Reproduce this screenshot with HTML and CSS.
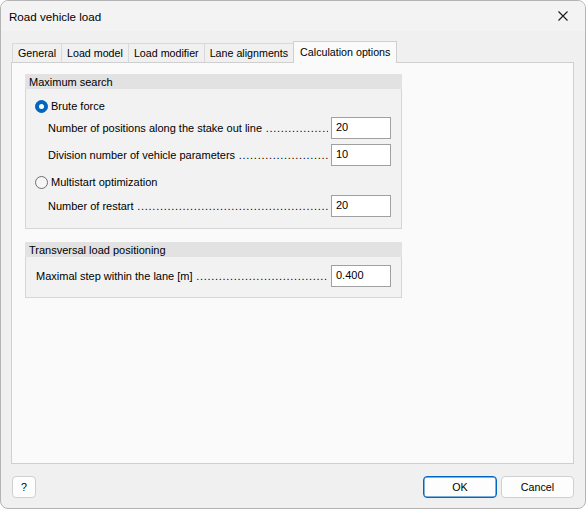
FILE: index.html
```html
<!DOCTYPE html>
<html>
<head>
<meta charset="utf-8">
<link rel="stylesheet" href="styles.css">
</head>
<body>
<div class="window">
  <div class="titlebar">
    <span class="title">Road vehicle load</span>
    <svg class="close" width="10" height="10" viewBox="0 0 10 10"><path d="M0.5 0.5 L9.5 9.5 M9.5 0.5 L0.5 9.5" stroke="#1a1a1a" stroke-width="1.1" fill="none"/></svg>
  </div>
  <div class="content">
    <div class="tabs">
      <div class="tab">General</div>
      <div class="tab">Load model</div>
      <div class="tab">Load modifier</div>
      <div class="tab">Lane alignments</div>
      <div class="tab active">Calculation options</div>
    </div>
    <div class="panel">
      <div class="group">
        <div class="group-head">Maximum search</div>
        <div class="group-body body-max">
          <div class="radio-row r1"><span class="radio checked"></span><span>Brute force</span></div>
          <div class="field f1 indent"><span class="label">Number of positions along the stake out line</span><span class="input">20</span></div>
          <div class="field f2 indent"><span class="label">Division number of vehicle parameters</span><span class="input">10</span></div>
          <div class="radio-row r2"><span class="radio"></span><span>Multistart optimization</span></div>
          <div class="field f3 indent"><span class="label">Number of restart</span><span class="input">20</span></div>
        </div>
      </div>
      <div class="group g2">
        <div class="group-head">Transversal load positioning</div>
        <div class="group-body body-trans">
          <div class="field plain"><span class="label">Maximal step within the lane [m]</span><span class="input">0.400</span></div>
        </div>
      </div>
    </div>
    <div class="footer">
      <div class="btn help">?</div>
      <div class="spacer"></div>
      <div class="btn ok">OK</div>
      <div class="btn cancel">Cancel</div>
    </div>
  </div>
</div>
</body>
</html>
```
FILE: styles.css
```css
* { box-sizing: border-box; }
html, body { margin: 0; padding: 0; background: #ffffff; }
body { width: 586px; height: 509px; font-family: "Liberation Sans", Arial, sans-serif; color: #000; }

.window {
  width: 586px; height: 509px;
  border: 1px solid #b4b4b4;
  border-radius: 8px;
  background: #f0f0f0;
  overflow: hidden;
  display: flex; flex-direction: column;
}

.titlebar {
  height: 30px; flex: none;
  background: #f3f3f3;
  display: flex; align-items: center;
  padding: 0 9px 0 8px;
}
.title { font-size: 11.6px; flex: 1; padding-top: 1px; }
.close { display: block; margin-right: 8px; }

.content { flex: 1; display: flex; flex-direction: column; padding: 10px 11px 10px 10px; }

.tabs { display: flex; align-items: flex-end; height: 21px; margin-left: 1px; }
.tab {
  height: 19px;
  border: 1px solid #d9d9d9; border-bottom: 0;
  margin-left: -1px;
  padding: 0 5px;
  font-size: 10.7px;
  display: flex; align-items: center;
  background: #f0f0f0;
  white-space: nowrap;
}
.tab:first-child { margin-left: 0; }
.tab.active {
  height: 22px; margin-bottom: -1px;
  padding: 0 6px 1px;
  background: #fafafa;
  border-color: #cfcfcf;
  position: relative; z-index: 1;
}

.panel {
  height: 402px; flex: none;
  border: 1px solid #cfcfcf;
  background: #fafafa;
  padding: 11px 13px;
}

.group { width: 377px; font-size: 11px; }
.g2 { margin-top: 13px; }
.group-head {
  height: 15px; background: #e2e2e2;
  padding-left: 4px;
  display: flex; align-items: center;
  white-space: nowrap;
}
.group-body {
  border: 1px solid #d6d6d6; border-top: 0;
  background: #f2f2f2;
  display: flex; flex-direction: column;
}
.body-max { padding: 7px 0 11px; }
.body-trans { padding: 8px 0 10px; }

.radio-row { height: 20px; display: flex; align-items: center; padding-left: 9px; }
.r2 { margin-top: 6px; }
.radio {
  width: 13px; height: 13px; border-radius: 50%;
  border: 1px solid #6e6e6e; background: #f6f6f6;
  margin-right: 3px; flex: none;
  display: flex; align-items: center; justify-content: center;
}
.radio.checked { background: #0067c0; border-color: #0067c0; }
.radio.checked::after {
  content: ""; width: 5px; height: 5px; border-radius: 50%; background: #fff;
}

.field { display: flex; align-items: center; height: 22px; padding-right: 10px; }
.f1 { margin-top: 1px; }
.f2 { margin-top: 5px; }
.f3 { margin-top: 3px; }
.indent { padding-left: 22px; }
.plain { padding-left: 10px; }
.label {
  flex: 1; overflow: hidden; white-space: nowrap; margin-right: 3px;
}
.label::after {
  content: " ......................................................................................................................";
  letter-spacing: 0.7px;
}
.input {
  width: 60px; height: 22px; flex: none;
  border: 1px solid #a0a0a0; background: #fff;
  padding: 0 4px 3px;
  display: flex; align-items: center;
}

.footer { display: flex; margin-top: 12px; height: 22px; }
.spacer { flex: 1; }
.btn {
  height: 22px;
  border: 1px solid #d0d0d0; border-radius: 4px;
  background: #fdfdfd;
  font-size: 10.7px;
  display: flex; align-items: center; justify-content: center;
}
.help { width: 24px; margin-left: 1px; }
.ok { width: 74px; border-color: #0067c0; box-shadow: inset 0 0 0 0.5px #0067c0; margin-right: 4px; }
.cancel { width: 73px; }
```
